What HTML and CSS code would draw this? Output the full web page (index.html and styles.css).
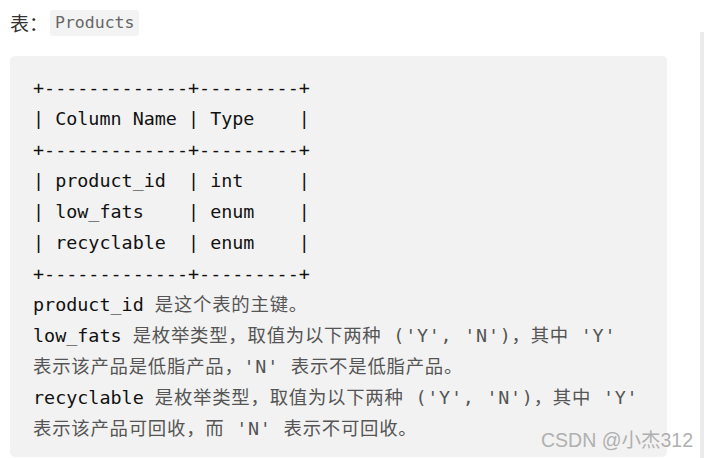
FILE: index.html
```html
<!DOCTYPE html>
<html lang="zh">
<head>
<meta charset="utf-8">
<link rel="stylesheet" href="styles.css">
</head>
<body>
<div class="page">
  <div class="main">
    <p class="title"><span class="label">表：</span><code class="inline">Products</code></p>
    <pre class="block">+-------------+---------+
| Column Name | Type    |
+-------------+---------+
| product_id  | int     |
| low_fats    | enum    |
| recyclable  | enum    |
+-------------+---------+
product_id <span class="t">是这个表的主键。</span>
low_fats <span class="t">是枚举类型，取值为以下两种 ('Y', 'N')，其中 'Y'</span>
<span class="t">表示该产品是低脂产品，'N' 表示不是低脂产品。</span>
recyclable <span class="t">是枚举类型，取值为以下两种 ('Y', 'N')，其中 'Y'</span>
<span class="t">表示该产品可回收，而 'N' 表示不可回收。</span></pre>
  </div>
  <div class="scroll"></div>
  <div class="wm">CSDN @小杰312</div>
</div>
</body>
</html>
```
FILE: styles.css
```css
html, body {
  margin: 0;
  padding: 0;
  background: #ffffff;
}
.page {
  position: relative;
  width: 704px;
  height: 458px;
  overflow: hidden;
  display: flex;
  align-items: flex-start;
}
.main {
  width: 657px;
  margin-left: 10px;
  flex: none;
}
.title {
  margin: 0;
  height: 56px;
  display: flex;
  align-items: flex-start;
  padding-top: 10px;
  box-sizing: border-box;
  font-family: "Noto Sans CJK SC", sans-serif;
  font-size: 19px;
  line-height: 26px;
  color: #333;
}
.label {
  width: 40px;
}
.inline {
  font-family: "DejaVu Sans Mono", monospace;
  font-size: 16.5px;
  line-height: 26px;
  height: 26px;
  padding: 0 5px;
  background: #f3f3f3;
  border-radius: 3px;
  color: #666;
}
.block {
  margin: 0;
  background: #f2f2f2;
  border-radius: 5px;
  padding: 16px 23px 15px;
  height: 401px;
  box-sizing: border-box;
  font-family: "DejaVu Sans Mono", "Noto Sans CJK SC", monospace;
  font-size: 18.4px;
  line-height: 31px;
  color: #111;
  white-space: pre;
}
.t {
  color: #555;
  letter-spacing: 0.75px;
}
.scroll {
  width: 4px;
  height: 426px;
  margin-top: 32px;
  margin-left: auto;
  background: #ebebeb;
  flex: none;
}
.wm {
  position: absolute;
  left: 541px;
  top: 427px;
  font-family: "Liberation Sans", "Noto Sans CJK SC", sans-serif;
  font-size: 19.5px;
  line-height: 26px;
  color: #b0b0b0;
}
```
